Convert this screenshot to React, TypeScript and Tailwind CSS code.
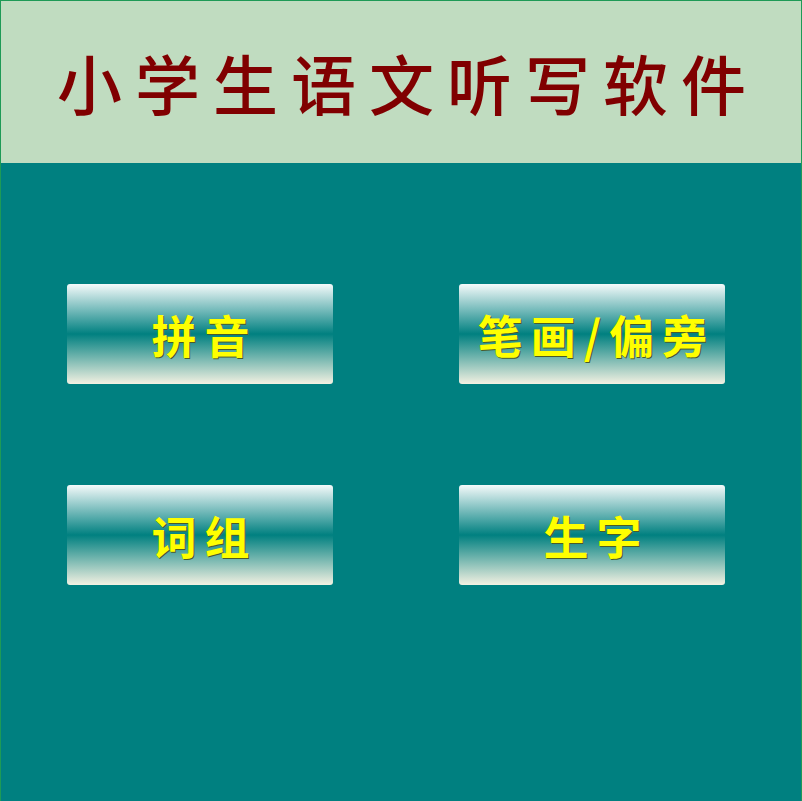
const menuItems = ["拼音", "笔画/偏旁", "词组", "生字"];

export default function App() {
  return (
    <div className="flex h-[801px] w-[802px] flex-col border-x border-t border-[#1e9a56] font-['Noto_Sans_CJK_SC',sans-serif]">
      {/* 标题栏 */}
      <header className="flex h-[162px] items-center justify-center bg-[#c0dcc0]">
        <h1 className="pl-[14px] text-[65px] font-medium leading-none tracking-[13px] text-[#800000]">
          小学生语文听写软件
        </h1>
      </header>

      {/* 功能按钮 */}
      <main className="flex-1 bg-[#008080] pl-[66px] pt-[121px]">
        <div className="grid grid-cols-[266px_266px] gap-x-[126px] gap-y-[101px]">
          {menuItems.map((item) => (
            <button
              key={item}
              className="flex h-[100px] items-center justify-center rounded-[3px] bg-[linear-gradient(to_bottom,#f4fafa_0%,#008080_50%,#f3f1e2_100%)]"
            >
              <span className="pl-[9px] text-[45px] font-semibold leading-none tracking-[8px] text-[#ffff00] [text-shadow:1px_1px_0_#4a5a2a]">
                {item}
              </span>
            </button>
          ))}
        </div>
      </main>
    </div>
  );
}
